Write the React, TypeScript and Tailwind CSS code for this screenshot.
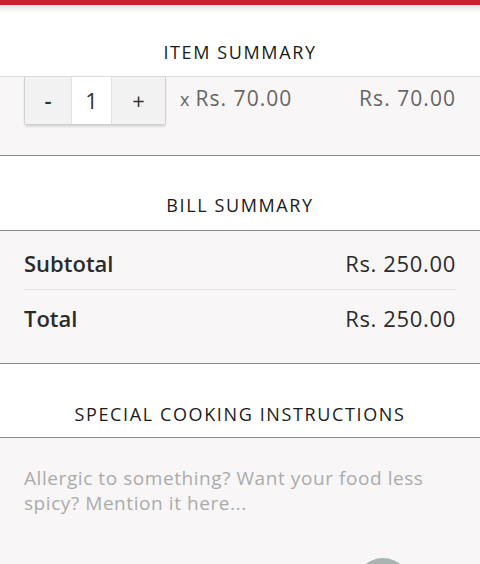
import React from 'react';

const font = { fontFamily: '"Open Sans", Lato, Arial, sans-serif' };

function SectionHeader({ title, className }: { title: string; className: string }) {
  return (
    <div className={`bg-white flex items-end justify-center border-b border-[#8a8a8a] ${className}`}>
      <span className="text-[18px] leading-[24px] tracking-[0.09em] font-medium text-[#1a1a1a]">{title}</span>
    </div>
  );
}

export default function App() {
  const [qty, setQty] = React.useState(1);

  return (
    <div className="w-[480px] h-[564px] overflow-hidden bg-[#f8f6f7] relative" style={font}>
      <div className="h-[5px] bg-[#cb202d]" />
      <div className="h-[8px] bg-gradient-to-b from-[#e4e4e4] to-white" />

      {/* item summary */}
      <div className="bg-white h-[64px] flex items-end justify-center pb-[12px] border-b border-[#dcdcdc]">
        <span className="text-[18px] leading-[24px] tracking-[0.09em] font-medium text-[#1a1a1a]">ITEM SUMMARY</span>
      </div>
      <div className="h-[79px] flex items-start px-6 border-b border-[#8a8a8a]">
        <div className="flex h-[48px] border border-t-0 border-[#cfcfcf] rounded-b-[3px] shadow-[0_2px_2px_rgba(0,0,0,0.12)] text-[22px] text-[#333]">
          <button onClick={() => setQty(Math.max(0, qty - 1))} className="w-[46px] bg-[#f2f2f2] flex items-center justify-center font-semibold">-</button>
          <div className="w-[41px] bg-white border-x border-[#e2e2e2] flex items-center justify-center">{qty}</div>
          <button onClick={() => setQty(qty + 1)} className="w-[53px] bg-[#f2f2f2] flex items-center justify-center">+</button>
        </div>
        <div className="flex-1 h-[44px] flex items-center justify-between pl-[14px] text-[21px] tracking-[0.05em] text-[#666]">
          <span><span className="text-[18px] mr-[5px]">x</span>Rs. 70.00</span>
          <span>Rs. 70.00</span>
        </div>
      </div>

      {/* bill summary */}
      <SectionHeader title="BILL SUMMARY" className="h-[75px] pb-[13px]" />
      <div className="px-6 pt-[7px] pb-[19px] border-b border-[#8a8a8a] text-[22px] text-[#2b2b2b]">
        <div className="flex justify-between items-center h-[52px] border-b border-[#e4e2e3]">
          <span className="font-semibold">Subtotal</span>
          <span className="tracking-[0.03em]">Rs. 250.00</span>
        </div>
        <div className="flex justify-between items-center h-[54px] pt-[2px]">
          <span className="font-semibold">Total</span>
          <span className="tracking-[0.03em]">Rs. 250.00</span>
        </div>
      </div>

      {/* special instructions */}
      <SectionHeader title="SPECIAL COOKING INSTRUCTIONS" className="h-[74px] pb-[11px]" />
      <div className="px-6 pt-[28px]">
        <textarea
          rows={3}
          placeholder="Allergic to something? Want your food less spicy? Mention it here..."
          className="w-[420px] bg-transparent resize-none outline-none text-[19px] leading-[25px] tracking-[0.03em] text-[#444] placeholder:text-[#ababab]"
        />
      </div>

      <div className="absolute left-[355px] top-[558px] w-[56px] h-[56px] rounded-full bg-[#a9b3b2]" />
    </div>
  );
}
